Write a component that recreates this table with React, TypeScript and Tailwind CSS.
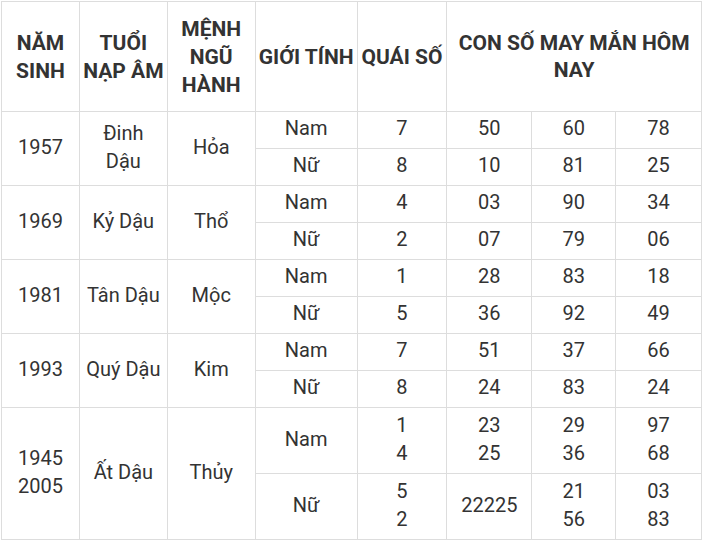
const rows = [
  {
    year: ["1957"],
    tuoi: ["Đinh", "Dậu"],
    menh: "Hỏa",
    sub: [
      { g: "Nam", q: ["7"], n: [["50"], ["60"], ["78"]] },
      { g: "Nữ", q: ["8"], n: [["10"], ["81"], ["25"]] },
    ],
  },
  {
    year: ["1969"],
    tuoi: ["Kỷ Dậu"],
    menh: "Thổ",
    sub: [
      { g: "Nam", q: ["4"], n: [["03"], ["90"], ["34"]] },
      { g: "Nữ", q: ["2"], n: [["07"], ["79"], ["06"]] },
    ],
  },
  {
    year: ["1981"],
    tuoi: ["Tân Dậu"],
    menh: "Mộc",
    sub: [
      { g: "Nam", q: ["1"], n: [["28"], ["83"], ["18"]] },
      { g: "Nữ", q: ["5"], n: [["36"], ["92"], ["49"]] },
    ],
  },
  {
    year: ["1993"],
    tuoi: ["Quý Dậu"],
    menh: "Kim",
    sub: [
      { g: "Nam", q: ["7"], n: [["51"], ["37"], ["66"]] },
      { g: "Nữ", q: ["8"], n: [["24"], ["83"], ["24"]] },
    ],
  },
  {
    year: ["1945", "2005"],
    tuoi: ["Ất Dậu"],
    menh: "Thủy",
    tall: true,
    sub: [
      { g: "Nam", q: ["1", "4"], n: [["23", "25"], ["29", "36"], ["97", "68"]] },
      { g: "Nữ", q: ["5", "2"], n: [["22225"], ["21", "56"], ["03", "83"]] },
    ],
  },
];

const cell = "border border-[#dddddd] text-center align-middle p-0";
const body = `${cell} pb-[4px]`;

function Lines({ items }: { items: string[] }) {
  return (
    <>
      {items.map((t, i) => (
        <div key={i}>{t}</div>
      ))}
    </>
  );
}

export default function App() {
  return (
    <div className="bg-white pl-px pt-px">
      <table
        className="table-fixed border-collapse text-[20px] leading-[28px] text-[#333333]"
        style={{ fontFamily: "Roboto, 'Liberation Sans', sans-serif" }}
      >
        <colgroup>
          <col className="w-[78px]" />
          <col className="w-[88px]" />
          <col className="w-[88px]" />
          <col className="w-[102px]" />
          <col className="w-[90px]" />
          <col className="w-[85px]" />
          <col className="w-[84px]" />
          <col className="w-[86px]" />
        </colgroup>
        <thead>
          <tr className="h-[110px] text-[21px] font-bold">
            <th className={cell}>
              NĂM
              <br />
              SINH
            </th>
            <th className={cell}>
              TUỔI
              <br />
              NẠP ÂM
            </th>
            <th className={cell}>
              MỆNH
              <br />
              NGŨ
              <br />
              HÀNH
            </th>
            <th className={cell}>GIỚI TÍNH</th>
            <th className={cell}>QUÁI SỐ</th>
            <th colSpan={3} className={`${cell} leading-[27px]`}>
              CON SỐ MAY MẮN HÔM
              <br />
              NAY
            </th>
          </tr>
        </thead>
        <tbody>
          {rows.map((r) =>
            r.sub.map((s, i) => (
              <tr key={r.year[0] + s.g} className={r.tall ? "h-[66px]" : "h-[37px]"}>
                {i === 0 && (
                  <>
                    <td rowSpan={2} className={body}>
                      <Lines items={r.year} />
                    </td>
                    <td rowSpan={2} className={body}>
                      <Lines items={r.tuoi} />
                    </td>
                    <td rowSpan={2} className={body}>
                      {r.menh}
                    </td>
                  </>
                )}
                <td className={body}>{s.g}</td>
                <td className={body}>
                  <Lines items={s.q} />
                </td>
                {s.n.map((n, j) => (
                  <td key={j} className={body}>
                    <Lines items={n} />
                  </td>
                ))}
              </tr>
            ))
          )}
        </tbody>
      </table>
    </div>
  );
}
